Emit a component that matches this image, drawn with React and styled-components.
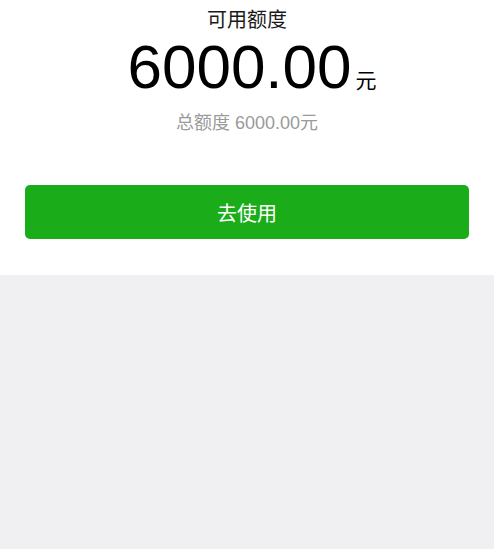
import React from "react";
import styled, { createGlobalStyle } from "styled-components";

const GlobalStyle = createGlobalStyle`
  html, body {
    margin: 0;
    padding: 0;
    background: #f0eff2;
    font-family: "Liberation Sans", "Noto Sans CJK SC", sans-serif;
  }
  #root {
    min-height: 549px;
  }
`;

const Top = styled.section`
  background: #ffffff;
  padding: 6px 25px 36px 25px;
  display: flex;
  flex-direction: column;
  align-items: center;
`;

const Title = styled.div`
  font-size: 20px;
  line-height: 28px;
  color: #1a1a1a;
`;

const Amount = styled.div`
  margin-top: 2px;
  height: 62px;
  font-size: 62px;
  line-height: 62px;
  color: #000000;
  padding-left: 10px;
`;

const Unit = styled.span`
  font-size: 21px;
  line-height: 0;
  margin-left: 4px;
`;

const Total = styled.div`
  margin-top: 13px;
  font-size: 18px;
  line-height: 24px;
  color: #9a9a9a;
`;

const UseButton = styled.button`
  margin-top: 50px;
  align-self: stretch;
  height: 54px;
  border: none;
  border-radius: 5px;
  background: #1aad19;
  color: #ffffff;
  font-family: inherit;
  font-size: 20px;
  cursor: pointer;
`;

export default function App() {
  return (
    <>
      <GlobalStyle />
      <Top>
        <Title>可用额度</Title>
        <Amount>
          6000.00<Unit>元</Unit>
        </Amount>
        <Total>总额度 6000.00元</Total>
        <UseButton>去使用</UseButton>
      </Top>
    </>
  );
}
